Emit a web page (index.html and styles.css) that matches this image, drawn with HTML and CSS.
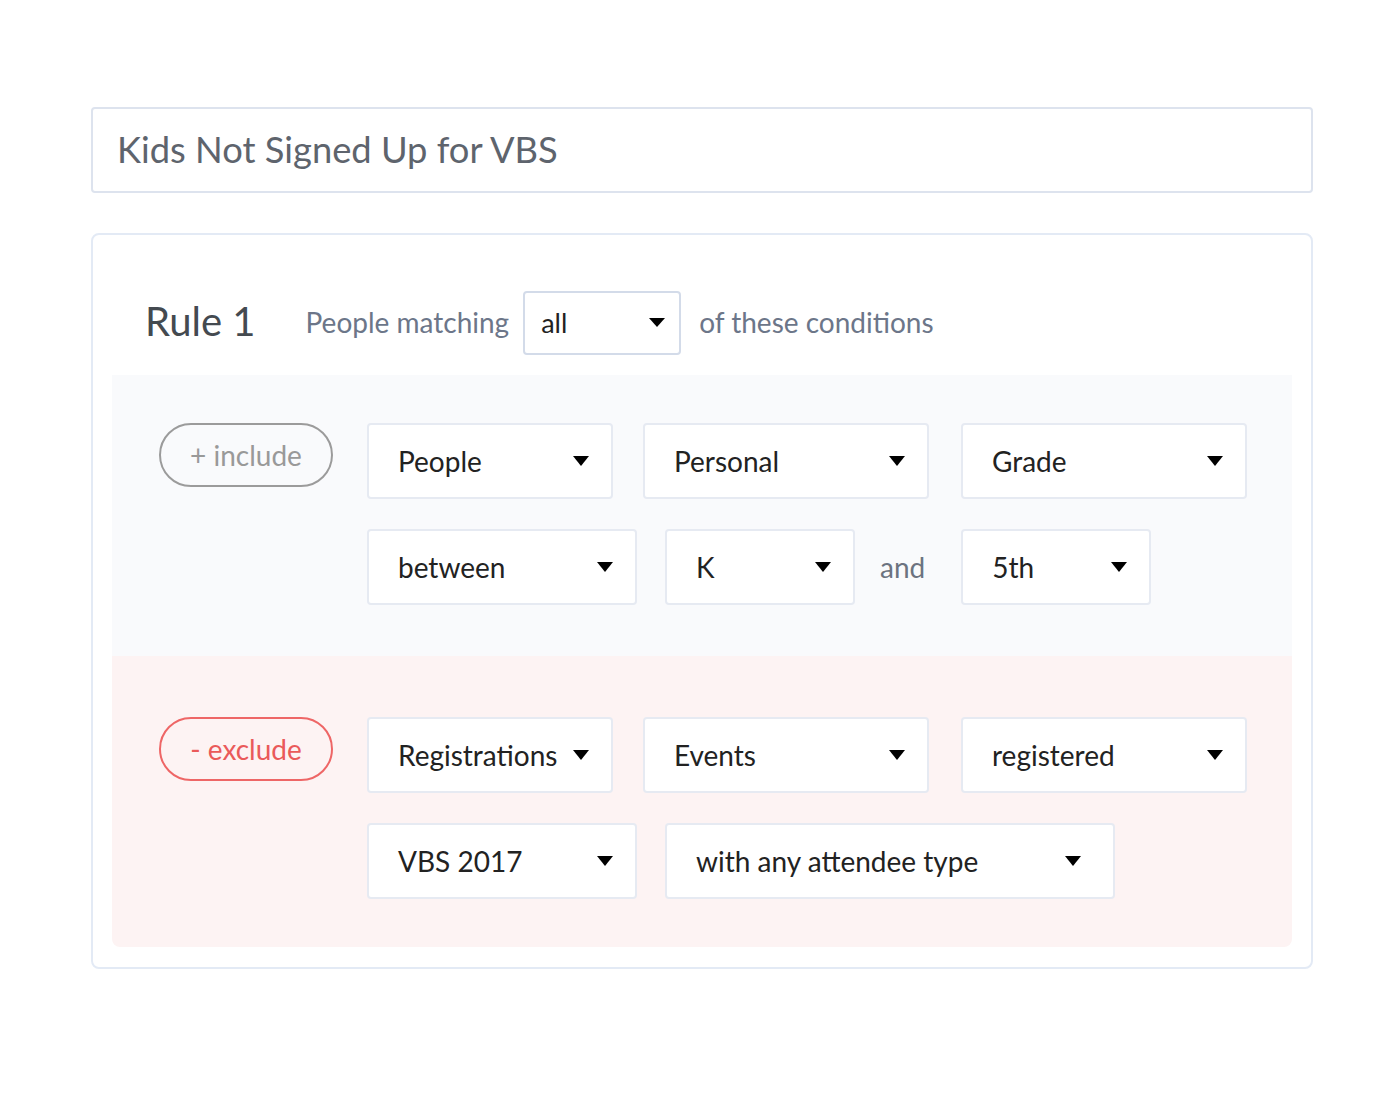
FILE: index.html
```html
<!DOCTYPE html>
<html>
<head>
<meta charset="utf-8">
<link rel="stylesheet" href="styles.css">
</head>
<body>
<div class="page">
  <div class="title-input">Kids Not Signed Up for VBS</div>
  <div class="rule-card">
    <div class="rule-header">
      <span class="rule-name">Rule 1</span>
      <span class="rule-label">People matching</span>
      <div class="select select-small"><span>all</span><i class="caret caret-small"></i></div>
      <span class="rule-label">of these conditions</span>
    </div>
    <div class="section include">
      <div class="pill pill-include">+ include</div>
      <div class="rows">
        <div class="row">
          <div class="select w246"><span>People</span><i class="caret"></i></div>
          <div class="select w286"><span>Personal</span><i class="caret"></i></div>
          <div class="select w286 gap-extra"><span>Grade</span><i class="caret"></i></div>
        </div>
        <div class="row row-tight">
          <div class="select w270"><span>between</span><i class="caret"></i></div>
          <div class="select w190"><span>K</span><i class="caret"></i></div>
          <span class="and">and</span>
          <div class="select w190"><span>5th</span><i class="caret"></i></div>
        </div>
      </div>
    </div>
    <div class="section exclude">
      <div class="pill pill-exclude">- exclude</div>
      <div class="rows">
        <div class="row">
          <div class="select w246"><span>Registrations</span><i class="caret"></i></div>
          <div class="select w286"><span>Events</span><i class="caret"></i></div>
          <div class="select w286 gap-extra"><span>registered</span><i class="caret"></i></div>
        </div>
        <div class="row row-tight">
          <div class="select w270"><span>VBS 2017</span><i class="caret"></i></div>
          <div class="select w450 wide-pad"><span>with any attendee type</span><i class="caret"></i></div>
        </div>
      </div>
    </div>
  </div>
</div>
</body>
</html>
```

FILE: styles.css
```css
* { box-sizing: border-box; }
html, body { margin: 0; padding: 0; background: #fff; }
body { font-family: Lato, "Open Sans", sans-serif; }

.page {
  width: 1222px;
  margin-left: 91px;
  padding-top: 107px;
}

.title-input {
  height: 86px;
  border: 2px solid #dde3ee;
  border-radius: 4px;
  padding-left: 24px;
  padding-bottom: 2px;
  display: flex;
  align-items: center;
  font-size: 36.3px;
  color: #5e646d;
}

.rule-card {
  margin-top: 40px;
  border: 2px solid #e3eaf5;
  border-radius: 8px;
  padding: 0 19px 20px 19px;
}

.rule-header {
  display: flex;
  align-items: center;
  padding: 56px 0 20px 33px;
}

.rule-name {
  font-size: 40px;
  color: #444a50;
  margin-right: 50px;
  margin-top: -4px;
}

.rule-label {
  font-size: 28px;
  color: #6c7689;
  margin-top: -3px;
}

.select {
  height: 76px;
  background: #fff;
  border: 2px solid #e6eaf2;
  border-radius: 4px;
  display: flex;
  align-items: center;
  justify-content: space-between;
  padding: 0 22px 0 29px;
  font-size: 28px;
  color: #222;
  flex: none;
}
.wide-pad { padding-right: 32px; }

.select-small {
  width: 158px;
  height: 64px;
  border-color: #d3dbe9;
  padding: 0 14px 2px 16px;
  margin: 0 18px 0 14px;
  font-size: 27px;
}

.caret {
  width: 0;
  height: 0;
  border-left: 8px solid transparent;
  border-right: 8px solid transparent;
  border-top: 10px solid #000;
}
.caret-small {
  border-left-width: 8px;
  border-right-width: 8px;
  border-top-width: 9px;
}

.section {
  display: flex;
  align-items: flex-start;
  padding-left: 47px;
}
.include {
  background: #f9fafc;
  padding-top: 48px;
  padding-bottom: 51px;
}
.exclude {
  background: #fdf3f3;
  padding-top: 61px;
  padding-bottom: 48px;
  border-radius: 0 0 8px 8px;
}

.pill {
  width: 174px;
  height: 64px;
  border-radius: 32px;
  border: 2px solid;
  display: flex;
  align-items: center;
  justify-content: center;
  font-size: 28px;
  margin-right: 34px;
  padding-bottom: 1px;
  flex: none;
}
.pill-include { border-color: #9b9b9b; color: #999; }
.pill-exclude { border-color: #ee6666; color: #ea5a5a; }

.rows {
  display: flex;
  flex-direction: column;
  gap: 30px;
}
.row {
  display: flex;
  align-items: center;
  gap: 30px;
}
.row-tight { gap: 28px; }
.gap-extra { margin-left: 2px; }

.w190 { width: 190px; }
.w246 { width: 246px; }
.w270 { width: 270px; }
.w286 { width: 286px; }
.w450 { width: 450px; }

.and {
  font-size: 28px;
  color: #6c7380;
  margin: 0 8px 0 -3px;
}
```
